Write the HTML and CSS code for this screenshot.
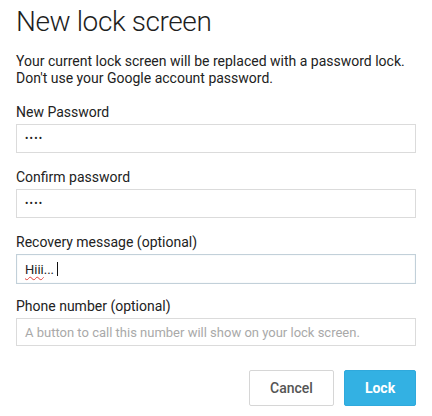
FILE: index.html
```html
<!DOCTYPE html>
<html lang="en">
<head>
<meta charset="utf-8">
<title>New lock screen</title>
<link rel="stylesheet" href="styles.css">
</head>
<body>
<div class="dialog">
  <h1 class="title">New lock screen</h1>
  <p class="intro">Your current lock screen will be replaced with a password lock.<br>Don't use your Google account password.</p>

  <div class="group">
    <div class="label">New Password</div>
    <div class="field"><span class="dots">••••</span></div>
  </div>

  <div class="group">
    <div class="label">Confirm password</div>
    <div class="field"><span class="dots">••••</span></div>
  </div>

  <div class="group">
    <div class="label">Recovery message (optional)</div>
    <div class="field focused"><span class="misspelled">Hiii</span>...<span class="caret"></span></div>
  </div>

  <div class="group phone">
    <div class="label">Phone number (optional)</div>
    <div class="field short"><span class="placeholder">A button to call this number will show on your lock screen.</span></div>
  </div>

  <div class="actions">
    <button class="btn cancel">Cancel</button>
    <button class="btn lock">Lock</button>
  </div>
</div>
</body>
</html>
```

FILE: styles.css
```css
html, body {
  margin: 0;
  padding: 0;
  background: #ffffff;
}

body {
  font-family: Roboto, "Liberation Sans", Arial, sans-serif;
  color: #222222;
}

.dialog {
  padding: 5px 16px 0 16px;
  width: 400px;
}

.title {
  margin: 0;
  font-size: 28px;
  font-weight: 300;
  line-height: 34px;
  letter-spacing: -0.4px;
  color: #1e1e1e;
}

.intro {
  margin: 14px 0 0 0;
  font-size: 14px;
  line-height: 17px;
  color: #222222;
}

.group {
  margin-top: 16px;
}

.group.phone {
  margin-top: 14px;
}

.intro + .group {
  margin-top: 17px;
}

.label {
  font-size: 14px;
  line-height: 17px;
  margin-bottom: 3px;
  color: #222222;
}

.field {
  box-sizing: border-box;
  height: 29px;
  border: 1px solid #dbdbdb;
  padding: 0 8px;
  display: flex;
  align-items: center;
  font-size: 13px;
  color: #222222;
}

.field.short {
  height: 28px;
}

.field.focused {
  height: 30px;
  border-color: #c2d0d9;
  box-shadow: inset 0 0 1px rgba(160, 185, 200, 0.6);
}

.dots {
  font-size: 10px;
  letter-spacing: 1.2px;
  color: #222222;
}

.misspelled {
  text-decoration: underline wavy #e0403a;
  text-decoration-thickness: 1px;
  text-underline-offset: 2px;
}

.caret {
  display: inline-block;
  width: 1px;
  height: 14px;
  background: #111111;
  margin-left: 3px;
}

.placeholder {
  color: #a9a9a9;
}

.actions {
  margin-top: 24px;
  display: flex;
  justify-content: flex-end;
  gap: 10px;
}

.btn {
  box-sizing: border-box;
  height: 36px;
  font-family: Roboto, "Liberation Sans", Arial, sans-serif;
  font-size: 14px;
  border-radius: 2px;
  padding: 0;
  cursor: pointer;
}

.btn.cancel {
  width: 85px;
  background: #ffffff;
  border: 1px solid #d6d6d6;
  color: #555555;
  font-weight: 500;
}

.btn.lock {
  width: 72px;
  background: #33b1e3;
  border: 1px solid #2fa9dc;
  color: #ffffff;
  font-weight: 700;
}
```
